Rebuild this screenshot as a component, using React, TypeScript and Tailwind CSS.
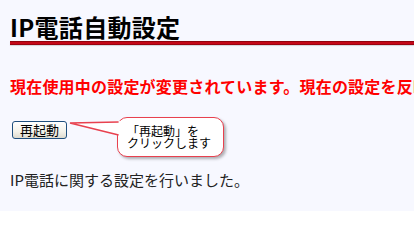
export default function App() {
  return (
    <div
      className="w-[414px] h-[211px] overflow-hidden bg-[#f7f8ff] pl-[10px] pt-[14px]"
      style={{ fontFamily: '"Noto Sans CJK JP", "Noto Sans", sans-serif' }}
    >
      {/* Title */}
      <h1 className="text-[24px] leading-[26px] font-bold text-black whitespace-nowrap tracking-[0.3px]">IP電話自動設定</h1>
      <div className="mt-[1px] h-[4px] bg-[linear-gradient(to_bottom,#7a0008,#dc0a1e_50%,#82000c)] shadow-[0_1px_1px_rgba(0,0,0,0.15)]" />

      {/* Warning */}
      <p className="mt-[31px] text-[16px] leading-[20px] font-bold tracking-[0.2px] text-[#ff0000] whitespace-nowrap">
        現在使用中の設定が変更されています。現在の設定を反映させるには再起動してください。
      </p>

      {/* Restart button + callout */}
      <div className="relative mt-[20px] h-[18px]">
        <button className="ml-[2px] w-[55px] h-[18px] rounded-[3px] border border-[#1f4f7e] bg-[linear-gradient(to_bottom,#ffffff,#f3f2ea_60%,#dedbcf)] text-[13px] leading-[16px] text-black">
          再起動
        </button>

        <div className="absolute left-[107px] top-[1px] w-[107px] h-[40px] rounded-[10px] border-[1.5px] border-[#e8414f] bg-white shadow-[2px_2px_3px_rgba(0,0,0,0.3)] pl-[9px] pt-[7px] text-[12px] leading-[12px] text-black whitespace-nowrap">
          <div>「再起動」を</div>
          <div>クリックします</div>
        </div>
        <svg className="absolute left-[50px] top-0" width="64" height="30" viewBox="0 0 64 30">
          <polygon points="10,7 61,5 61,20" fill="#ffffff" />
          <polyline points="58.6,6 10,7 58.6,19" fill="none" stroke="#e8414f" strokeWidth="1.5" strokeLinejoin="miter" />
        </svg>
      </div>

      {/* Result */}
      <p className="mt-[36px] text-[15px] leading-[20px] text-[#222] whitespace-nowrap">IP電話に関する設定を行いました。</p>
    </div>
  );
}
